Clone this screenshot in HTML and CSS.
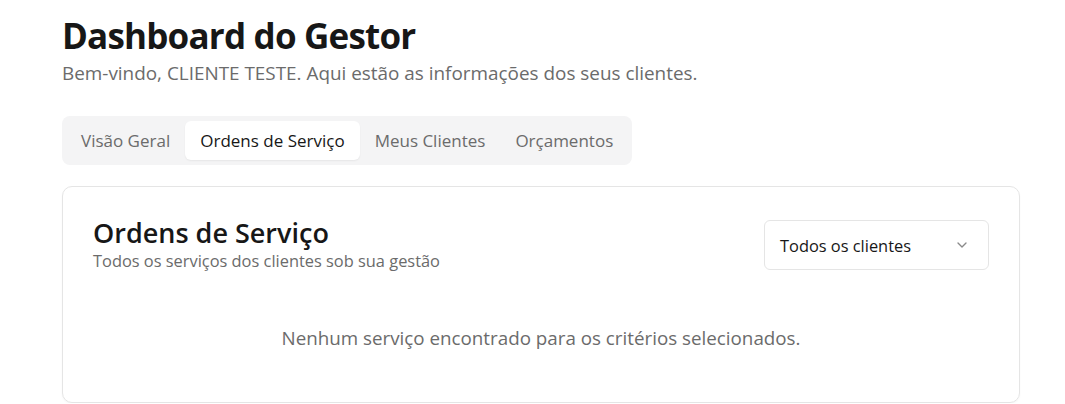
FILE: index.html
```html
<!DOCTYPE html>
<html lang="pt-BR">
<head>
<meta charset="utf-8">
<title>Dashboard do Gestor</title>
<link rel="stylesheet" href="styles.css">
</head>
<body>
<main class="page">
  <header class="page-header">
    <h1 class="page-title">Dashboard do Gestor</h1>
    <p class="page-subtitle">Bem-vindo, CLIENTE TESTE. Aqui estão as informações dos seus clientes.</p>
  </header>

  <nav class="tabs">
    <button class="tab">Visão Geral</button>
    <button class="tab tab-active">Ordens de Serviço</button>
    <button class="tab">Meus Clientes</button>
    <button class="tab">Orçamentos</button>
  </nav>

  <section class="card">
    <div class="card-header">
      <div class="card-heading">
        <h2 class="card-title">Ordens de Serviço</h2>
        <p class="card-desc">Todos os serviços dos clientes sob sua gestão</p>
      </div>
      <div class="select">
        <span class="select-value">Todos os clientes</span>
        <svg class="select-icon" width="16" height="16" viewBox="0 0 24 24" fill="none" stroke="currentColor" stroke-width="2" stroke-linecap="round" stroke-linejoin="round"><path d="m6 9 6 6 6-6"/></svg>
      </div>
    </div>
    <p class="empty">Nenhum serviço encontrado para os critérios selecionados.</p>
  </section>
</main>
</body>
</html>
```

FILE: styles.css
```css
* { box-sizing: border-box; }
html, body { margin: 0; padding: 0; background: #ffffff; }
body {
  font-family: "Open Sans", "Noto Sans", "Liberation Sans", sans-serif;
  color: #171717;
}
.page {
  padding: 14px 45px 0 62px;
}
.page-header { margin-bottom: 30px; }
.page-title {
  margin: 0;
  font-size: 35px;
  line-height: 44px;
  font-weight: 700;
  letter-spacing: -0.8px;
  color: #171717;
}
.page-subtitle {
  margin: 2px 0 0 0;
  font-size: 18.9px;
  line-height: 26px;
  color: #6b6b6b;
}
.tabs {
  display: inline-flex;
  align-items: center;
  padding: 5px 4px;
  background: #f4f4f5;
  border-radius: 8px;
  height: 49px;
}
.tab {
  border: 0;
  background: transparent;
  font-family: inherit;
  font-size: 17px;
  font-weight: 500;
  color: #6b6b6b;
  padding: 0 15px;
  height: 39px;
  border-radius: 6px;
  cursor: pointer;
}
.tab-active {
  background: #ffffff;
  color: #171717;
  box-shadow: 0 1px 2px rgba(0,0,0,0.06);
}
.card {
  margin-top: 21px;
  border: 1px solid #e5e5e5;
  border-radius: 10px;
  height: 217px;
  padding: 28px 30px 0 30px;
  box-shadow: 0 1px 2px rgba(0,0,0,0.04);
}
.card-header {
  display: flex;
  justify-content: space-between;
  align-items: flex-start;
}
.card-title {
  margin: 0;
  font-size: 27px;
  line-height: 36px;
  font-weight: 600;
  color: #171717;
}
.card-desc {
  margin: 0;
  font-size: 16.4px;
  line-height: 20px;
  color: #6b6b6b;
}
.select {
  display: flex;
  align-items: center;
  justify-content: space-between;
  width: 225px;
  height: 50px;
  margin-top: 5px;
  padding: 0 18px 0 15px;
  border: 1px solid #e5e5e5;
  border-radius: 6px;
  font-size: 16.4px;
  color: #171717;
}
.select-icon { color: #8a8a8a; }
.empty {
  margin: 54px 0 0 0;
  text-align: center;
  font-size: 18.8px;
  line-height: 26px;
  color: #6b6b6b;
}
```
